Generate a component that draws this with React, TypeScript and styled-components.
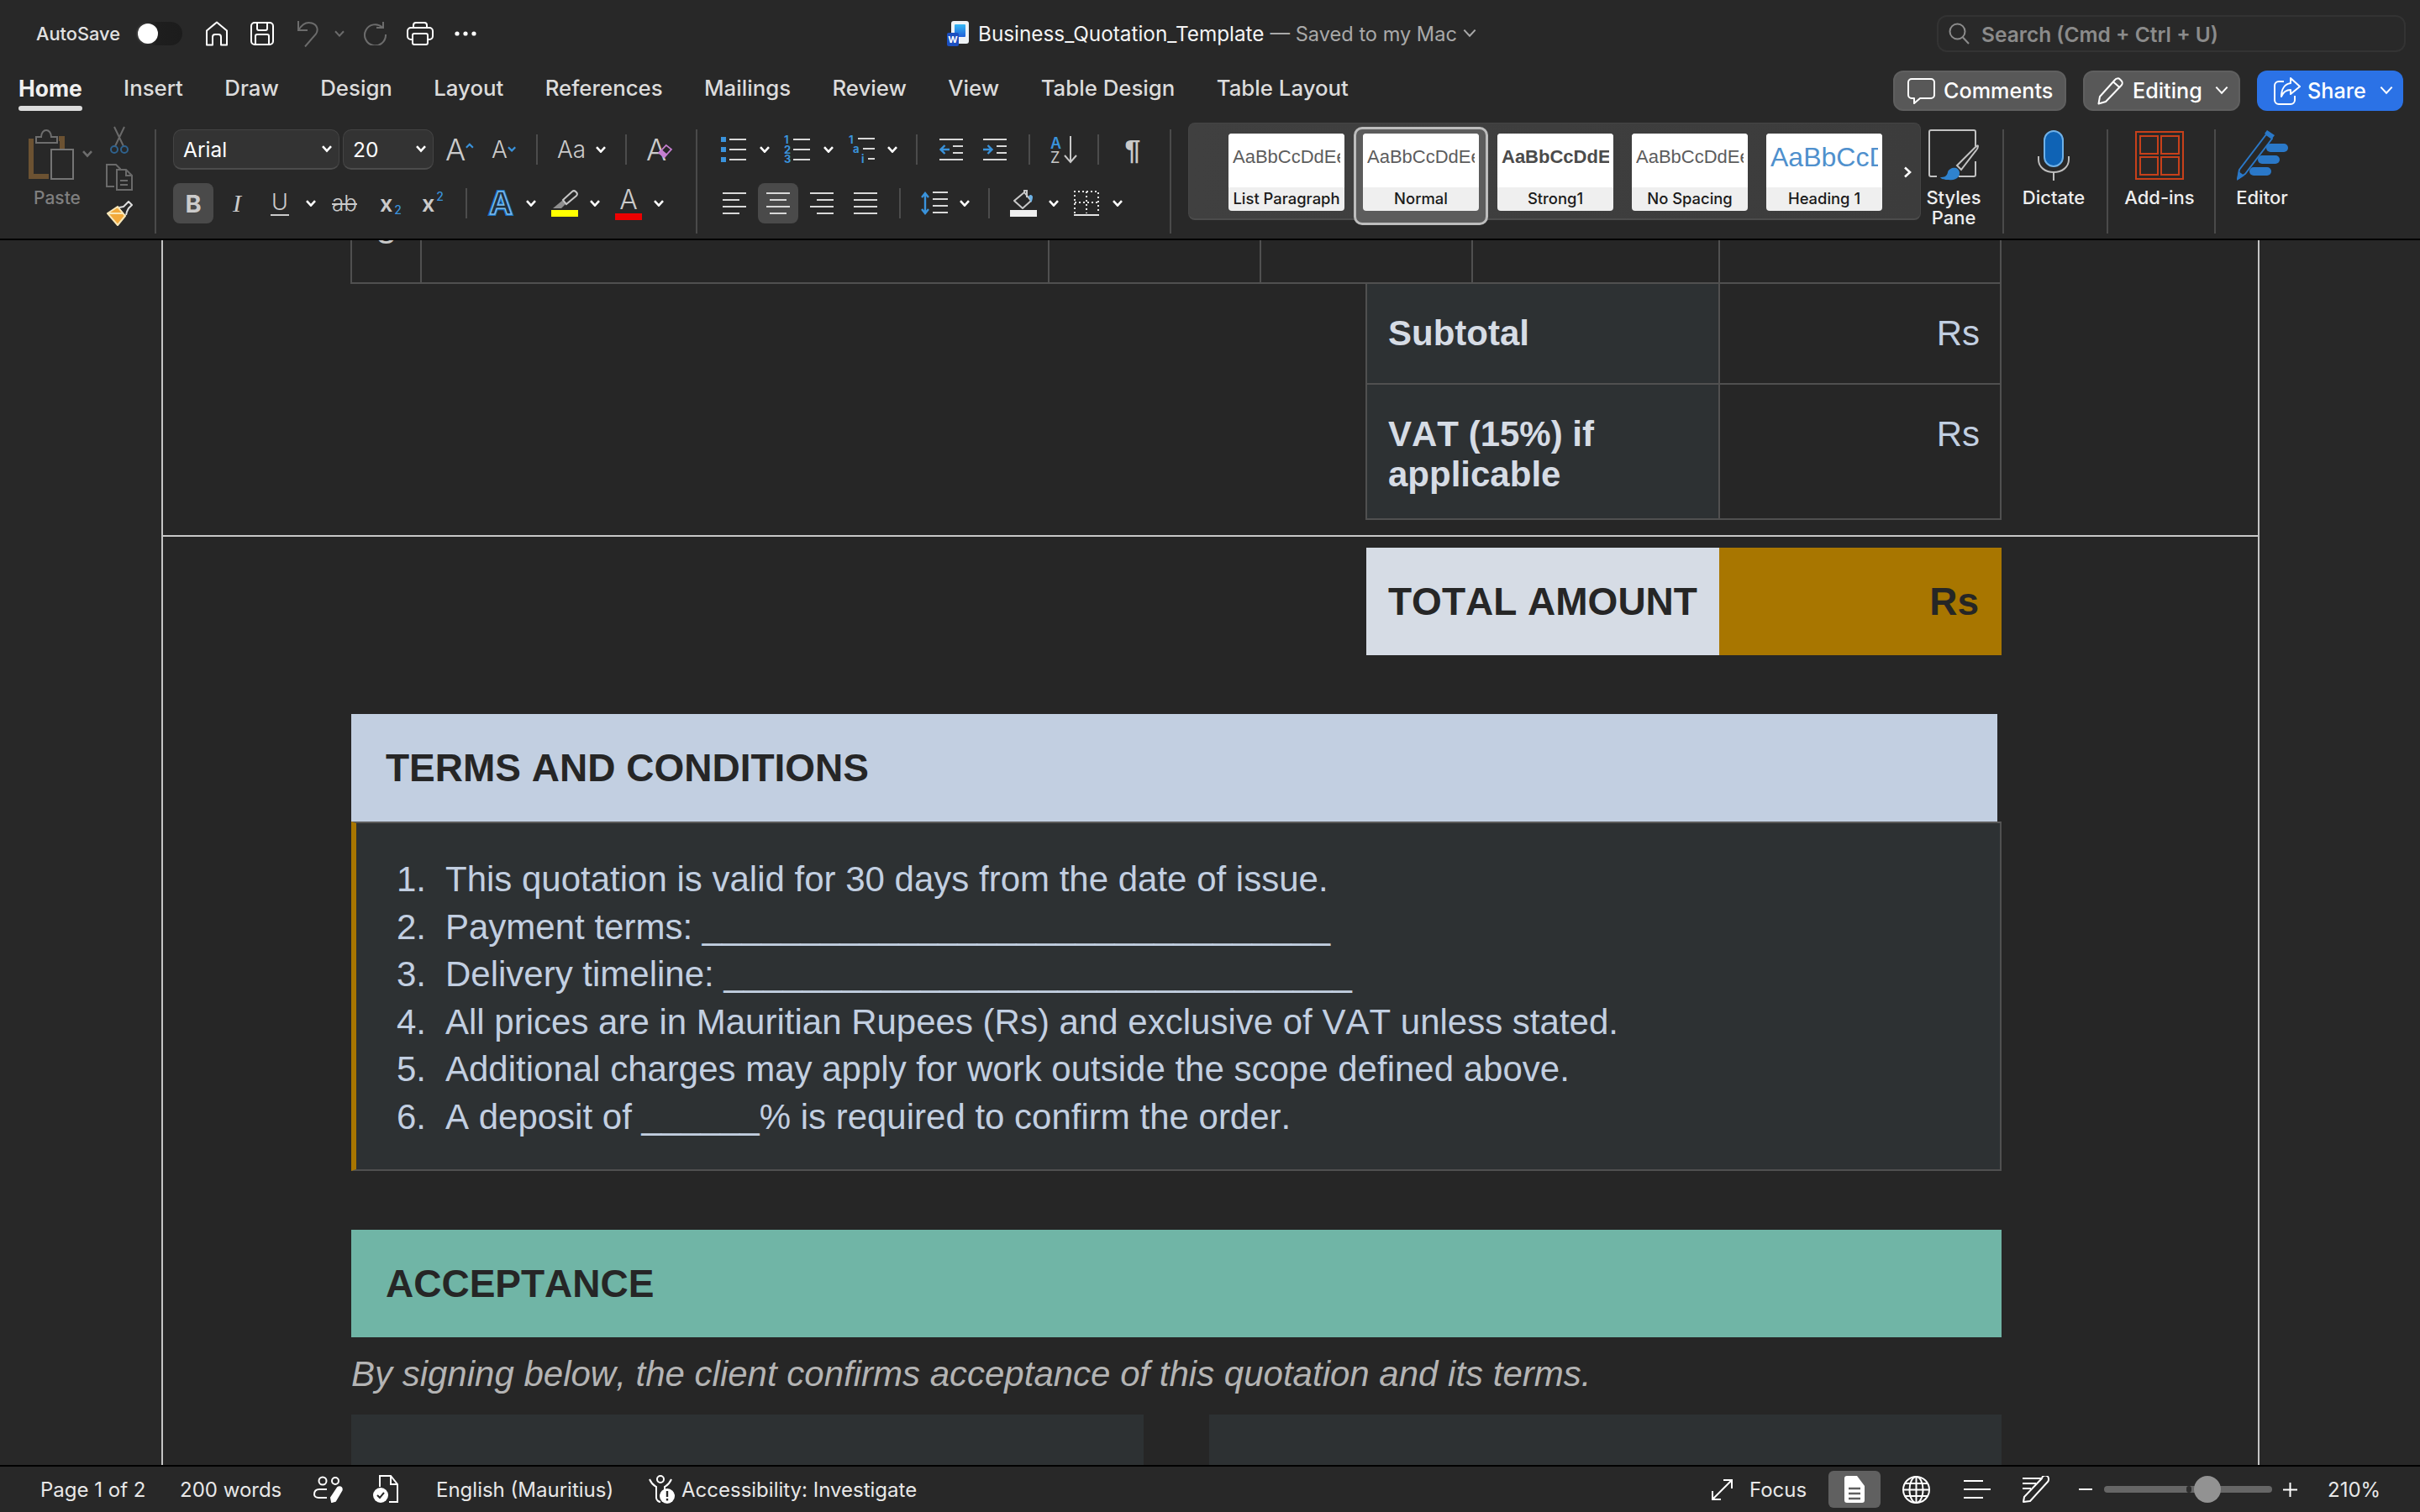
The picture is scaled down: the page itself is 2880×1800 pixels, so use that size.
import React from "react";
import styled, { createGlobalStyle } from "styled-components";

const UI_FONT = `Inter, "Noto Sans", "Liberation Sans", sans-serif`;
const DOC_FONT = `"Liberation Sans", Arial, sans-serif`;

const GlobalStyle = createGlobalStyle`
  html, body {
    margin: 0;
    padding: 0;
    background: #282828;
    overflow: hidden;
  }
  #root {
    width: 2880px;
    height: 1800px;
  }
  * {
    box-sizing: border-box;
  }
`;

const Shell = styled.div`
  width: 2880px;
  height: 1800px;
  display: flex;
  flex-direction: column;
  background: #282828;
  color: #fff;
  font-family: ${UI_FONT};
  overflow: hidden;
`;

/* generic slot for toolbars: width + gap before it */
const Slot = styled.div<{ $w: number; $ml?: number }>`
  flex: none;
  width: ${(p) => p.$w}px;
  margin-left: ${(p) => p.$ml || 0}px;
  display: flex;
  align-items: center;
  justify-content: center;
  white-space: nowrap;
`;

/* ---------- title bar ---------- */
const TitleBar = styled.div`
  height: 80px;
  display: flex;
  align-items: center;
  flex: none;
`;

const QuickTools = styled.div`
  width: 1127px;
  display: flex;
  align-items: center;
`;

const AutoSaveLabel = styled(Slot)`
  font-size: 21.8px;
  font-weight: 500;
  color: #e2e2e2;
  justify-content: flex-start;
`;

const Toggle = styled.div`
  flex: none;
  width: 55px;
  height: 28px;
  margin-left: 20px;
  border-radius: 14px;
  padding: 2px;
  background: linear-gradient(90deg, #3a3a3a, #1e1e1e 45%, #1c1c1c);
`;

const ToggleKnob = styled.div`
  width: 24px;
  height: 24px;
  border-radius: 50%;
  background: #fff;
`;

const DocTitle = styled.div`
  width: 1178px;
  display: flex;
  align-items: center;
  font-size: 24.3px;
  font-weight: 400;
  white-space: nowrap;
`;

const TitleName = styled.span`
  margin-left: 11px;
  color: #f4f4f4;
`;

const TitleSaved = styled.span`
  margin-left: 7px;
  font-size: 23.6px;
  color: #a9a9a9;
`;

const SearchBox = styled.div`
  width: 558px;
  height: 44px;
  border: 2px solid #333;
  border-radius: 12px;
  background: #292929;
  display: flex;
  align-items: center;
  padding: 2px 0 0 12px;
  gap: 14px;
  font-size: 24.5px;
  font-weight: 600;
  color: #8b8b8b;
  white-space: nowrap;
`;

/* ---------- tabs ---------- */
const TabRow = styled.div`
  height: 66px;
  display: flex;
  flex: none;
  justify-content: space-between;
`;

const Tabs = styled.div`
  display: flex;
  gap: 49.4px;
  padding: 8px 0 0 22px;
`;

const Tab = styled.div<{ $active?: boolean }>`
  font-size: ${(p) => (p.$active ? 26.4 : 25.8)}px;
  line-height: 34px;
  font-weight: ${(p) => (p.$active ? 700 : 500)};
  color: ${(p) => (p.$active ? "#f0f0f0" : "#dcdcdc")};
  white-space: nowrap;
  &::after {
    content: "";
    display: ${(p) => (p.$active ? "block" : "none")};
    height: 6px;
    margin-top: 4px;
    border-radius: 3px;
    background: #dcdcdc;
  }
`;

const ActionButtons = styled.div`
  display: flex;
  gap: 20px;
  padding: 4px 20px 0 0;
  align-items: flex-start;
`;

const ActionButton = styled.div<{ $w: number; $primary?: boolean }>`
  width: ${(p) => p.$w}px;
  height: 48px;
  border-radius: 12px;
  padding-left: ${(p) => (p.$primary ? 20 : 15)}px;
  background: ${(p) => (p.$primary ? "#2b72e6" : "#585858")};
  border: ${(p) => (p.$primary ? "none" : "2px solid #5f5f5f")};
  display: flex;
  align-items: center;
  gap: ${(p) => (p.$primary ? 8 : 10)}px;
  font-size: 25.2px;
  font-weight: 500;
  color: #fff;
  white-space: nowrap;
`;

const ButtonChevron = styled.span`
  display: flex;
  margin-left: auto;
  margin-right: 12px;
`;

/* ---------- ribbon ---------- */
const Ribbon = styled.div`
  height: 138px;
  flex: none;
  display: flex;
  align-items: flex-start;
`;

const MajorDivider = styled.div<{ $ml?: number }>`
  flex: none;
  width: 2px;
  height: 124px;
  margin-top: 8px;
  margin-left: ${(p) => p.$ml || 0}px;
  background: #4a4a4a;
`;

const ClipboardGroup = styled.div`
  width: 184px;
  flex: none;
  display: flex;
  padding: 4px 0 0 34px;
`;

const PasteCol = styled.div`
  width: 76px;
  padding-top: 3px;
  display: flex;
  flex-direction: column;
`;

const PasteIconRow = styled.div`
  display: flex;
  align-items: center;
  gap: 10px;
  height: 61px;
`;

const PasteLabel = styled.div`
  width: 68px;
  text-align: center;
  margin-top: 8px;
  font-size: 21px;
  line-height: 28px;
  font-weight: 500;
  color: #7f7f7f;
`;

const ClipTools = styled.div`
  width: 32px;
  margin-left: 16px;
  display: flex;
  flex-direction: column;
  align-items: center;
  gap: 12px;
`;

const ToolGroup = styled.div<{ $w: number }>`
  flex: none;
  width: ${(p) => p.$w}px;
  padding-top: 8px;
  display: flex;
  flex-direction: column;
  gap: 16px;
`;

const ToolRow = styled.div`
  height: 48px;
  display: flex;
  align-items: center;
`;

const Combo = styled.div<{ $w: number; $ml?: number }>`
  flex: none;
  width: ${(p) => p.$w}px;
  margin-left: ${(p) => p.$ml || 0}px;
  height: 48px;
  border-radius: 10px;
  border: 1px solid #444;
  border-bottom: 2px solid #4c4c4c;
  background: #333;
  display: flex;
  align-items: center;
  justify-content: space-between;
  padding: 0 8px 0 11px;
  font-size: 24.5px;
  color: #fff;
`;

const SmallSep = styled.div<{ $ml: number }>`
  flex: none;
  width: 2px;
  height: 36px;
  margin-left: ${(p) => p.$ml}px;
  background: #4c4c4c;
`;

const ToggledBox = styled.div<{ $w: number; $ml?: number; $on?: boolean }>`
  flex: none;
  width: ${(p) => p.$w}px;
  height: 48px;
  margin-left: ${(p) => p.$ml || 0}px;
  border-radius: 8px;
  background: ${(p) => (p.$on ? "#4a4a4a" : "transparent")};
  display: flex;
  align-items: center;
  justify-content: center;
`;

const Glyph = styled.span<{ $size: number; $weight?: number; $color?: string; $serif?: boolean; $italic?: boolean }>`
  font-size: ${(p) => p.$size}px;
  font-weight: ${(p) => p.$weight || 400};
  color: ${(p) => p.$color || "#cbcbcb"};
  font-family: ${(p) => (p.$serif ? `"Liberation Serif", serif` : "inherit")};
  font-style: ${(p) => (p.$italic ? "italic" : "normal")};
  line-height: 1;
`;

const UnderlineGlyph = styled(Glyph)`
  border-bottom: 2px solid #cbcbcb;
  padding: 0 1px 1px;
`;

const StrikeGlyph = styled(Glyph)`
  text-decoration: line-through;
  text-decoration-thickness: 2px;
`;

const Script = styled.span<{ $up?: boolean }>`
  align-self: ${(p) => (p.$up ? "flex-start" : "flex-end")};
  margin-left: 2px;
  font-size: 14px;
  font-weight: 500;
  line-height: 1;
  color: #3a93dc;
`;

const ScriptBox = styled.div`
  height: 30px;
  display: flex;
  align-items: center;
`;

/* text effects button: heavy outline with a lighter inner stroke on top */
const OutlineA = styled.span`
  position: relative;
  font-family: ${DOC_FONT};
  font-size: 38px;
  font-weight: 700;
  line-height: 1;
  color: #1a6fc0;
  -webkit-text-stroke: 4px #1a6fc0;
  &::after {
    content: "A";
    position: absolute;
    left: 0;
    top: 0;
    color: #22303c;
    -webkit-text-stroke: 1.5px #79bdf0;
  }
`;

const ColorStack = styled.div`
  display: flex;
  flex-direction: column;
  align-items: center;
  width: 32px;
`;

const ColorBar = styled.div<{ $color: string }>`
  width: 32px;
  height: 8px;
  background: ${(p) => p.$color};
`;

const Pilcrow = styled.span`
  font-family: ${DOC_FONT};
  font-size: 34px;
  font-weight: 700;
  line-height: 1;
  color: #c9c9c9;
`;

/* style gallery */
const Gallery = styled.div`
  flex: none;
  width: 872px;
  height: 116px;
  margin-left: 20px;
  padding: 12px 0 0 47px;
  display: flex;
  gap: 22px;
  border-radius: 8px;
  border: 1px solid #454545;
  border-bottom: 2px solid #4c4c4c;
  background: linear-gradient(90deg, #404040, #3c3c3c);
`;

const CardFrame = styled.div<{ $selected?: boolean }>`
  flex: none;
  ${(p) =>
    p.$selected
      ? `margin: -8px -11px; padding: 5px 8px; border: 3px solid #bdbdbd; border-radius: 10px; background: #5c5c5c;`
      : ""}
`;

const StyleCard = styled.div`
  width: 138px;
  height: 92px;
  border-radius: 4px;
  overflow: hidden;
  background: #efefef;
  font-family: ${DOC_FONT};
`;

const StylePreview = styled.div<{ $color?: string; $size?: number; $bold?: boolean }>`
  height: 64px;
  background: #fff;
  padding: 7px 5px 0;
  white-space: nowrap;
  line-height: 42px;
  font-size: ${(p) => p.$size || 22}px;
  font-weight: ${(p) => (p.$bold ? 700 : 400)};
  color: ${(p) => p.$color || "#5d5d5d"};
`;

const PreviewClip = styled.div`
  overflow: hidden;
`;

const StyleLabel = styled.div`
  height: 28px;
  text-align: center;
  font-family: ${UI_FONT};
  font-size: 18.4px;
  line-height: 26px;
  font-weight: 500;
  color: #1a1a1a;
  white-space: nowrap;
`;

const GalleryMore = styled(Slot)`
  height: 92px;
`;

const BigButton = styled.div<{ $w: number }>`
  flex: none;
  width: ${(p) => p.$w}px;
  padding-top: 6px;
  display: flex;
  flex-direction: column;
  align-items: center;
`;

const BigIcon = styled.div`
  height: 66px;
  display: flex;
  align-items: center;
  justify-content: center;
`;

const BigLabel = styled.div`
  margin-top: 5px;
  font-size: 22px;
  line-height: 24px;
  font-weight: 500;
  text-align: center;
  color: #eee;
`;

const BlackLine = styled.div`
  height: 2px;
  flex: none;
  background: #000;
`;

/* ---------- document ---------- */
const DocArea = styled.div`
  flex: 1;
  min-height: 0;
  overflow: hidden;
  padding: 0 191px 0 192px;
  background: #282828;
`;

const DocPage = styled.div`
  width: 2497px;
  height: 100%;
  border-left: 2px solid #c4c4c4;
  border-right: 2px solid #c4c4c4;
  background: #262626;
  font-family: ${DOC_FONT};
  font-kerning: none;
  overflow: hidden;
`;

const PageOne = styled.div`
  height: 351px;
  padding-left: 224px;
  border-bottom: 2px solid #c8c8c8;
  box-sizing: content-box;
`;

const ItemRow = styled.div`
  height: 52px;
  margin-left: -1px;
  width: 1965px;
  display: grid;
  grid-template-columns: 83px 747px 252px 252px 294px 337px;
  border-bottom: 2px solid #505050;
  border-right: 2px solid #505050;
`;

const ItemCell = styled.div`
  border-left: 2px solid #505050;
  overflow: hidden;
  display: flex;
  justify-content: center;
`;

const ClippedDigit = styled.span`
  font-size: 42px;
  line-height: 48px;
  height: 48px;
  margin-top: -34px;
  color: #c8c8c8;
`;

const TotalsTable = styled.div`
  width: 757px;
  margin-left: 1207px;
  display: grid;
  grid-template-columns: 420px 335px;
  border-left: 2px solid #505050;
  border-right: 2px solid #505050;
  border-bottom: 2px solid #505050;
`;

const TotalLabel = styled.div<{ $h: number }>`
  height: ${(p) => p.$h}px;
  padding: 35px 0 0 25px;
  background: #2d3133;
  border-right: 2px solid #505050;
  font-size: 42px;
  font-weight: 700;
  line-height: 48px;
  color: #d6dce5;
`;

const TotalValue = styled.div<{ $h: number }>`
  height: ${(p) => p.$h}px;
  padding: 35px 26px 0 0;
  text-align: right;
  font-size: 42px;
  line-height: 48px;
  color: #c2cfe1;
`;

const RowLine = styled.div`
  grid-column: 1 / 3;
  height: 2px;
  background: #505050;
`;

const Content = styled.div`
  padding: 13px 0 0 224px;
`;

const GrandTotal = styled.div`
  width: 756px;
  height: 128px;
  margin-left: 1208px;
  display: grid;
  grid-template-columns: 420px 336px;
  font-size: 46px;
  font-weight: 700;
  color: #262626;
`;

const GrandLabel = styled.div`
  background: #d6dce5;
  padding-left: 26px;
  display: flex;
  align-items: center;
`;

const GrandValue = styled.div`
  background: #a87600;
  padding-right: 27px;
  display: flex;
  align-items: center;
  justify-content: flex-end;
`;

const Banner = styled.div<{ $color: string; $w: number }>`
  width: ${(p) => p.$w}px;
  height: 128px;
  margin-top: 70px;
  padding-left: 41px;
  display: flex;
  align-items: center;
  background: ${(p) => p.$color};
  font-size: 46px;
  font-weight: 700;
  color: #262626;
`;

const TermsBody = styled.ol`
  width: 1964px;
  height: 416px;
  border-top: 2px solid #5a5a5a;
  border-left: 6px solid #a87600;
  border-right: 2px solid #505050;
  border-bottom: 2px solid #505050;
  background: #2d3133;
  padding: 39px 0 0 48px;
  margin: 0;
  list-style: none;
  font-size: 42px;
  line-height: 56.5px;
  color: #c2cfe1;
`;

const TermItem = styled.li`
  display: flex;
  white-space: pre;
`;

const TermNumber = styled.span`
  width: 58px;
  flex: none;
`;

const AcceptNote = styled.div`
  height: 92px;
  padding-bottom: 5px;
  display: flex;
  align-items: center;
  font-size: 42px;
  font-style: italic;
  color: #b4b4b4;
`;

const SignRow = styled.div`
  width: 1964px;
  display: flex;
  justify-content: space-between;
`;

const SignBox = styled.div`
  width: 943px;
  height: 120px;
  background: #2d3133;
`;

/* ---------- status bar ---------- */
const StatusBar = styled.div`
  height: 54px;
  flex: none;
  display: flex;
  align-items: center;
  justify-content: space-between;
  font-size: 24px;
  color: #e8e8e8;
`;

const StatusGroup = styled.div<{ $right?: boolean }>`
  display: flex;
  align-items: center;
  padding-right: ${(p) => (p.$right ? 50 : 0)}px;
`;

const StatusText = styled(Slot)`
  justify-content: flex-start;
`;

const ViewButton = styled(Slot)`
  height: 44px;
  border-radius: 6px;
  background: #606060;
`;

const ZoomTrack = styled.div`
  flex: none;
  position: relative;
  width: 200px;
  height: 8px;
  margin-left: 14px;
  border-radius: 4px;
  background: #666;
`;

const ZoomKnob = styled.div`
  position: absolute;
  left: 107px;
  top: -12px;
  width: 32px;
  height: 32px;
  border-radius: 50%;
  background: #929292;
`;

const ZoomTick = styled.div`
  position: absolute;
  left: 98px;
  top: 0;
  width: 6px;
  height: 8px;
  border-radius: 3px;
  background: #2c2c2c;
`;

/* ---------- icons ---------- */
const Chev = ({ color = "#fff", w = 12, sw = 2.6 }: { color?: string; w?: number; sw?: number }) => (
  <svg width={w} height={w * 0.7} viewBox="0 0 12 8.4" fill="none" stroke={color} strokeWidth={sw * (12 / w)} style={{ flex: "none" }}>
    <path d="M1 1.2 6 6.6 11 1.2" />
  </svg>
);

const Line = ({ x1, x2, y, color = "#d8d8d8" }: { x1: number; x2: number; y: number; color?: string }) => (
  <path d={`M${x1} ${y}H${x2}`} stroke={color} strokeWidth={2} fill="none" />
);

const HomeIcon = () => (
  <svg width="28" height="30" viewBox="0 0 28 30" fill="none" stroke="#fff" strokeWidth="2">
    <path d="M2 28.5V11.5L14 1.5l12 10v17h-7V19a3 3 0 0 0-3-3h-4a3 3 0 0 0-3 3v9.500z" strokeLinejoin="round" />
  </svg>
);

const SaveIcon = () => (
  <svg width="28" height="28" viewBox="0 0 28 28" fill="none" stroke="#fff" strokeWidth="2">
    <rect x="1" y="1" width="26" height="26" rx="4" />
    <path d="M8 1v7a2 2 0 0 0 2 2h8a2 2 0 0 0 2-2V1M6 27V17a2 2 0 0 1 2-2h12a2 2 0 0 1 2 2v10" />
  </svg>
);

const UndoIcon = () => (
  <svg width="28" height="32" viewBox="0 0 28 32" fill="none" stroke="#6c6c6c" strokeWidth="2">
    <path d="M2 1v11h11M2.500 11.500C7 4 13 2 18 3.500c7 2 8 8.500 5 13L10 31.500" />
  </svg>
);

const RedoIcon = () => (
  <svg width="28" height="28" viewBox="0 0 28 28" fill="none" stroke="#6c6c6c" strokeWidth="2">
    <path d="M23 5.500A12.500 12.500 0 1 0 27 14M16 6h8V-1" transform="translate(0 1)" />
  </svg>
);

const PrintIcon = () => (
  <svg width="32" height="28" viewBox="0 0 32 28" fill="none" stroke="#fff" strokeWidth="2">
    <path d="M8 7V4a3 3 0 0 1 3-3h10a3 3 0 0 1 3 3v3" />
    <path d="M7 21H5a4 4 0 0 1-4-4v-6a4 4 0 0 1 4-4h22a4 4 0 0 1 4 4v6a4 4 0 0 1-4 4h-2" />
    <rect x="7" y="14" width="18" height="13" rx="2" />
  </svg>
);

const DotsIcon = () => (
  <svg width="26" height="6" viewBox="0 0 26 6" fill="#fff">
    <circle cx="3" cy="3" r="2.600" />
    <circle cx="13" cy="3" r="2.600" />
    <circle cx="23" cy="3" r="2.600" />
  </svg>
);

const WordIcon = () => (
  <svg width="26" height="30" viewBox="0 0 26 30">
    <defs>
      <linearGradient id="wordFace" x1="0" y1="0" x2="0" y2="1">
        <stop offset="0" stopColor="#35b8f4" />
        <stop offset="1" stopColor="#1f5fd8" />
      </linearGradient>
    </defs>
    <rect x="5" y="0" width="21" height="27" rx="3" fill="#eef2f6" />
    <rect x="9" y="4" width="13" height="15" rx="1" fill="url(#wordFace)" />
    <rect x="0" y="14" width="14" height="16" rx="2" fill="#1c4fc0" />
    <text x="7" y="26" textAnchor="middle" fontSize="11" fontWeight="700" fill="#fff" fontFamily={UI_FONT}>W</text>
  </svg>
);

const SearchIcon = () => (
  <svg width="25" height="26" viewBox="0 0 25 26" fill="none" stroke="#8c8c8c" strokeWidth="2" style={{ marginTop: -2 }}>
    <circle cx="10.500" cy="10.500" r="9" />
    <path d="M17 17.500 24 25" />
  </svg>
);

const CommentIcon = () => (
  <svg width="33" height="31" viewBox="0 0 33 31" fill="none" stroke="#fff" strokeWidth="2" style={{ flex: "none" }}>
    <path d="M5 1h23a4 4 0 0 1 4 4v15a4 4 0 0 1-4 4H15l-7 6v-6H5a4 4 0 0 1-4-4V5a4 4 0 0 1 4-4z" strokeLinejoin="round" />
  </svg>
);

const PencilIcon = () => (
  <svg width="32" height="33" viewBox="0 0 32 33" fill="none" stroke="#fff" strokeWidth="2" style={{ flex: "none" }}>
    <path d="M1.500 31.500 3 23 21 3a4 4 0 0 1 6-.5l1.500 1.500a4 4 0 0 1 .2 5.500L10 29z" strokeLinejoin="round" />
    <path d="M19 5.500l8 7" />
  </svg>
);

const ShareIcon = () => (
  <svg width="32" height="34" viewBox="0 0 32 34" fill="none" stroke="#fff" strokeWidth="2" style={{ flex: "none" }}>
    <path d="M12 6H6a5 5 0 0 0-5 5v17a5 5 0 0 0 5 5h14a5 5 0 0 0 5-5v-5" />
    <path d="M20 2l11 10-11 9v-5c-6 0-9 3-11 8 0-9 4-15 11-16z" strokeLinejoin="round" />
  </svg>
);

const ClipboardIcon = () => (
  <svg width="54" height="61" viewBox="0 0 54 61" fill="none">
    <path d="M3 12v45h21M36 12h4v12" stroke="#6c5232" strokeWidth="6" />
    <path d="M9 17V10h6c0-5 3-8 6-8s6 3 6 8h7v7z" stroke="#6e6e6e" strokeWidth="2" fill="#282828" />
    <rect x="27" y="25" width="26" height="35" stroke="#757575" strokeWidth="2" fill="#282828" />
  </svg>
);

const ScissorsIcon = () => (
  <svg width="22" height="33" viewBox="0 0 22 33" fill="none">
    <path d="M5 1 16 24M17 1 6 24" stroke="#6a6a6a" strokeWidth="2" />
    <circle cx="5" cy="28" r="4" stroke="#2f628e" strokeWidth="2" />
    <circle cx="17" cy="28" r="4" stroke="#2f628e" strokeWidth="2" />
  </svg>
);

const CopyIcon = () => (
  <svg width="32" height="32" viewBox="0 0 32 32" fill="none" stroke="#6a6a6a" strokeWidth="2">
    <path d="M10 27H1V1h11l5 5v1" />
    <path d="M13 7h11l7 7v17H13z" />
    <path d="M24 7v7h7M17 20h9M17 25h9" />
  </svg>
);

const BrushIcon = () => (
  <svg width="32" height="30" viewBox="0 0 32 30">
    <path d="M2 15 14 7l9 11-9 11z" fill="#f2a93b" />
    <path d="M2 15 14 7l9 11-9 11zM2 15l18 0" fill="none" stroke="#f8e7b8" strokeWidth="2" strokeLinejoin="round" />
    <path d="M16 8l5-1 3-3 3-3 4 4-4 4-2 4-1 4" fill="#282828" stroke="#dedede" strokeWidth="2" strokeLinejoin="round" />
  </svg>
);

const CaretUp = () => (
  <svg width="11" height="7" viewBox="0 0 11 7" fill="none" stroke="#3a93dc" strokeWidth="2.400" style={{ alignSelf: "flex-start", marginTop: 10 }}>
    <path d="M1 6 5.500 1.500 10 6" />
  </svg>
);

const CaretDown = () => (
  <svg width="11" height="7" viewBox="0 0 11 7" fill="none" stroke="#3a93dc" strokeWidth="2.400" style={{ alignSelf: "flex-start", marginTop: 10 }}>
    <path d="M1 1 5.500 5.500 10 1" />
  </svg>
);

const EraserIcon = () => (
  <svg width="20" height="20" viewBox="0 0 20 20" fill="none" stroke="#c57fd0" strokeWidth="2" style={{ alignSelf: "flex-end", marginLeft: -10, marginBottom: 6 }}>
    <path d="M1.500 12 11 2l7 5.500-9.500 10.500z" fill="#282828" />
    <path d="M1.500 12l7 6 3-3.500-7-6z" fill="#c57fd0" />
  </svg>
);

const HighlighterIcon = () => (
  <svg width="32" height="24" viewBox="0 0 32 24">
    <path d="M2 22h10l6-6-4-4z" fill="#8f8f8f" />
    <path d="M14 12 25 2a3 3 0 0 1 4 0l1 1a3 3 0 0 1 0 4L18 17z" fill="none" stroke="#c6c6c6" strokeWidth="2" />
  </svg>
);

const BulletsIcon = () => (
  <svg width="30" height="30" viewBox="0 0 30 30" fill="#3a93dc">
    <rect x="0" y="0" width="6" height="6" />
    <rect x="0" y="12" width="6" height="6" />
    <rect x="0" y="24" width="6" height="6" />
    <Line x1={10} x2={30} y={3} />
    <Line x1={10} x2={30} y={15} />
    <Line x1={10} x2={30} y={27} />
  </svg>
);

const NumberingIcon = () => (
  <svg width="31" height="32" viewBox="0 0 31 32" fill="#3a93dc" fontSize="13" fontWeight="700" fontFamily={UI_FONT} overflow="visible">
    <text x="0" y="9">1</text>
    <text x="0" y="21">2</text>
    <text x="0" y="32">3</text>
    <Line x1={11} x2={31} y={4} />
    <Line x1={11} x2={31} y={16} />
    <Line x1={11} x2={31} y={28} />
  </svg>
);

const MultilevelIcon = () => (
  <svg width="31" height="32" viewBox="0 0 31 32" fill="#3a93dc" fontSize="13" fontWeight="700" fontFamily={UI_FONT} overflow="visible">
    <text x="0" y="9">1</text>
    <text x="5" y="20">a</text>
    <text x="15" y="32">i</text>
    <Line x1={11} x2={31} y={3} />
    <Line x1={17} x2={31} y={15} />
    <Line x1={23} x2={31} y={27} />
  </svg>
);

const AlignIcon = ({ mode }: { mode: "left" | "center" | "right" | "justify" }) => {
  const rows = [28, 20, 28, 20];
  return (
    <svg width="28" height="26" viewBox="0 0 28 26">
      {rows.map((len, i) => {
        const w = mode === "justify" ? 28 : len;
        const x = mode === "left" || mode === "justify" ? 0 : mode === "right" ? 28 - w : (28 - w) / 2;
        return <Line key={i} x1={x} x2={x + w} y={1 + i * 8} />;
      })}
    </svg>
  );
};

const IndentIcon = ({ out }: { out?: boolean }) => (
  <svg width="28" height="26" viewBox="0 0 28 26" fill="none">
    <Line x1={0} x2={28} y={1} />
    <Line x1={16} x2={28} y={9} />
    <Line x1={16} x2={28} y={17} />
    <Line x1={0} x2={28} y={25} />
    <path d={out ? "M12 13H2M6.500 8 1.500 13l5 5" : "M0 13h10M5.500 8l5 5-5 5"} stroke="#3a93dc" strokeWidth="2.400" />
  </svg>
);

const SortIcon = () => (
  <svg width="32" height="32" viewBox="0 0 32 32" fontFamily={UI_FONT} fontSize="18" overflow="visible">
    <text x="0" y="15" fill="#3a93dc" fontWeight="600">A</text>
    <text x="0" y="32" fill="#c9c9c9">Z</text>
    <path d="M24 0v30M17 23l7 8 7-8" fill="none" stroke="#c9c9c9" strokeWidth="2" />
  </svg>
);

const SpacingIcon = () => (
  <svg width="32" height="28" viewBox="0 0 32 28" fill="none">
    <path d="M5 3v22M1 7l4-5 4 5M1 21l4 5 4-5" stroke="#3a93dc" strokeWidth="2.400" />
    <Line x1={14} x2={32} y={1} />
    <Line x1={14} x2={32} y={9} />
    <Line x1={14} x2={32} y={17} />
    <Line x1={14} x2={32} y={25} />
  </svg>
);

const FillIcon = () => (
  <svg width="32" height="24" viewBox="0 0 32 24" fill="none">
    <path d="M5 13 17 3l8 10-10 9z" stroke="#c9c9c9" strokeWidth="2" strokeLinejoin="round" />
    <path d="M17 3V1h3v8" stroke="#c9c9c9" strokeWidth="2" />
    <path d="M22 8c2-3 4-2 5 0 0 3-1 6-2 7-1-2-1-4-3-7z" fill="#6db2e6" />
  </svg>
);

const BordersIcon = () => (
  <svg width="30" height="30" viewBox="0 0 30 30" fill="none" stroke="#e4e4e4" strokeWidth="2">
    <path d="M1 27V1h28v26M15 1v26M1 14h28" strokeDasharray="2 3" />
    <path d="M0 29h30" />
  </svg>
);

const StylesPaneIcon = () => (
  <svg width="60" height="62" viewBox="0 0 60 62" fill="none">
    <path d="M10 56H3a2 2 0 0 1-2-2V3a2 2 0 0 1 2-2h51a2 2 0 0 1 2 2v17M56 38v16a2 2 0 0 1-2 2H36" stroke="#c2c2c2" strokeWidth="2" />
    <path d="M34 43 56 21c2-2 3-2 3-1 0 2-1 4-3 6L39 48z" stroke="#c2c2c2" strokeWidth="2" fill="#282828" />
    <path d="M14 57c5 0 8-1 9-6 1-4 6-6 10-5 4 2 5 6 3 10-3 4-8 5-12 4-4 0-8 0-10-3z" fill="#2f83cf" />
  </svg>
);

const MicIcon = () => (
  <svg width="38" height="60" viewBox="0 0 38 60" fill="none">
    <rect x="8" y="1" width="22" height="42" rx="11" fill="#0f63b5" stroke="#6fb1e8" strokeWidth="2" />
    <path d="M1 31v4c0 9 8 15 18 15s18-6 18-15v-4M19 50v10" stroke="#bdbdbd" strokeWidth="2" />
  </svg>
);

const AddinsIcon = () => (
  <svg width="58" height="58" viewBox="0 0 58 58" fill="none" stroke="#c7401a" strokeWidth="2">
    <rect x="1" y="1" width="56" height="56" />
    <rect x="6" y="6" width="21" height="21" />
    <rect x="31" y="6" width="21" height="21" />
    <rect x="6" y="31" width="21" height="21" />
    <rect x="31" y="31" width="21" height="21" />
  </svg>
);

const EditorIcon = () => (
  <svg width="62" height="62" viewBox="0 0 62 62">
    <rect x="36" y="17" width="26" height="10" rx="5" fill="#2a78c8" />
    <rect x="26" y="31" width="26" height="10" rx="5" fill="#2a78c8" />
    <rect x="16" y="45" width="26" height="10" rx="5" fill="#2a78c8" />
    <path d="M2 59 4 48 36 6l7 5-32 42z" fill="#282828" stroke="#2a78c8" strokeWidth="2" strokeLinejoin="round" />
    <path d="M37 1l9 6-3 4-9-6z" fill="#2a78c8" />
    <path d="M1 61 3 50l7 5z" fill="#2a78c8" />
  </svg>
);

const PeopleIcon = () => (
  <svg width="36" height="32" viewBox="0 0 36 32" fill="none" stroke="#fff" strokeWidth="2">
    <circle cx="11" cy="6" r="4.500" />
    <circle cx="26" cy="6" r="4" />
    <path d="M16 26H6c-3 0-5-2-5-4 0-5 3-6 6-6h9" />
    <path d="M22 31l-1-5 8-12c1-1 3-1 4 0s1 3 0 4l-7 12z" fill="#fff" />
  </svg>
);

const DocCheckIcon = () => (
  <svg width="30" height="34" viewBox="0 0 30 34" fill="none">
    <path d="M8 14V1h13l8 10v21h-10" stroke="#fff" strokeWidth="2" />
    <path d="M21 1v10h8" stroke="#fff" strokeWidth="2" />
    <circle cx="9" cy="24" r="9" fill="#fff" />
    <path d="M5 24l3 3 5-6" stroke="#282828" strokeWidth="2" fill="none" />
  </svg>
);

const AccessIcon = () => (
  <svg width="33" height="34" viewBox="0 0 33 34" fill="none">
    <circle cx="15" cy="5" r="4" stroke="#fff" strokeWidth="2" />
    <path d="M2 5c3 7 7 8 8 9v13c0 3 3 5 5 5M28 5c-3 7-7 8-8 9v4" stroke="#fff" strokeWidth="2" />
    <circle cx="23" cy="25" r="9" fill="#fff" />
    <path d="M23 19v7M23 28v2.500" stroke="#282828" strokeWidth="2.400" />
  </svg>
);

const FocusIcon = () => (
  <svg width="25" height="25" viewBox="0 0 25 25" fill="none" stroke="#fff" strokeWidth="2">
    <path d="M2 23 23 2M14 1h10v10M1 14v10h10" />
  </svg>
);

const PageViewIcon = () => (
  <svg width="24" height="32" viewBox="0 0 24 32">
    <path d="M3 0h12l9 12v17a3 3 0 0 1-3 3H3a3 3 0 0 1-3-3V3a3 3 0 0 1 3-3z" fill="#fff" />
    <path d="M5 15h14M5 21h14M5 27h14" stroke="#606060" strokeWidth="2.400" />
  </svg>
);

const GlobeIcon = () => (
  <svg width="33" height="33" viewBox="0 0 33 33" fill="none" stroke="#fff" strokeWidth="2">
    <circle cx="16.500" cy="16.500" r="15.500" />
    <ellipse cx="16.500" cy="16.500" rx="8" ry="15.500" />
    <path d="M16.500 1v31M3 9h27M1 16.500h31M3 24h27" />
  </svg>
);

const LinesIcon = () => (
  <svg width="33" height="24" viewBox="0 0 33 24" fill="none" stroke="#fff" strokeWidth="2">
    <path d="M1 2h23M1 12h32M1 22h23" />
  </svg>
);

const DraftIcon = () => (
  <svg width="34" height="32" viewBox="0 0 34 32" fill="none" stroke="#fff" strokeWidth="2">
    <path d="M0 3h22M0 9h16M0 15h10" />
    <path d="M1 31l1-6L23 3a3.500 3.500 0 0 1 8 1 4 4 0 0 1-1 3L9 30z" strokeLinejoin="round" />
  </svg>
);

const TermsList = [
  "This quotation is valid for 30 days from the date of issue.",
  `Payment terms: ${"_".repeat(32)}`,
  `Delivery timeline: ${"_".repeat(32)}`,
  "All prices are in Mauritian Rupees (Rs) and exclusive of VAT unless stated.",
  "Additional charges may apply for work outside the scope defined above.",
  `A deposit of ${"_".repeat(6)}% is required to confirm the order.`,
];

const TAB_NAMES = ["Insert", "Draw", "Design", "Layout", "References", "Mailings", "Review", "View", "Table Design", "Table Layout"];

export default function App() {
  return (
    <Shell>
      <GlobalStyle />
      <TitleBar>
        <QuickTools>
          <AutoSaveLabel $w={99} $ml={43}>AutoSave</AutoSaveLabel>
          <Toggle>
            <ToggleKnob />
          </Toggle>
          <Slot $w={28} $ml={27}><HomeIcon /></Slot>
          <Slot $w={28} $ml={26}><SaveIcon /></Slot>
          <Slot $w={28} $ml={27}><UndoIcon /></Slot>
          <Slot $w={12} $ml={17}><Chev color="#6c6c6c" sw={2} /></Slot>
          <Slot $w={28} $ml={22}><RedoIcon /></Slot>
          <Slot $w={32} $ml={24}><PrintIcon /></Slot>
          <Slot $w={26} $ml={25}><DotsIcon /></Slot>
        </QuickTools>
        <DocTitle>
          <WordIcon />
          <TitleName>Business_Quotation_Template</TitleName>
          <TitleSaved>— Saved to my Mac</TitleSaved>
          <Slot $w={16} $ml={7}><Chev color="#a9a9a9" w={16} sw={2} /></Slot>
        </DocTitle>
        <SearchBox>
          <SearchIcon />
          Search (Cmd + Ctrl + U)
        </SearchBox>
      </TitleBar>

      <TabRow>
        <Tabs>
          <Tab $active>Home</Tab>
          {TAB_NAMES.map((name) => (
            <Tab key={name}>{name}</Tab>
          ))}
        </Tabs>
        <ActionButtons>
          <ActionButton $w={206}>
            <CommentIcon />
            Comments
          </ActionButton>
          <ActionButton $w={187}>
            <PencilIcon />
            Editing
            <ButtonChevron><Chev w={16} sw={2} /></ButtonChevron>
          </ActionButton>
          <ActionButton $w={174} $primary>
            <ShareIcon />
            Share
            <ButtonChevron><Chev w={16} sw={2} /></ButtonChevron>
          </ActionButton>
        </ActionButtons>
      </TabRow>

      <Ribbon>
        <ClipboardGroup>
          <PasteCol>
            <PasteIconRow>
              <ClipboardIcon />
              <Chev color="#6e6e6e" />
            </PasteIconRow>
            <PasteLabel>Paste</PasteLabel>
          </PasteCol>
          <ClipTools>
            <ScissorsIcon />
            <CopyIcon />
            <BrushIcon />
          </ClipTools>
        </ClipboardGroup>
        <MajorDivider />

        <ToolGroup $w={642}>
          <ToolRow>
            <Combo $w={198} $ml={20}>Arial<Chev /></Combo>
            <Combo $w={108} $ml={4}>20<Chev /></Combo>
            <Slot $w={34} $ml={14}>
              <Glyph $size={36} $weight={300}>A</Glyph>
              <CaretUp />
            </Slot>
            <Slot $w={29} $ml={21}>
              <Glyph $size={28} $weight={300}>A</Glyph>
              <CaretDown />
            </Slot>
            <SmallSep $ml={24} />
            <Slot $w={32} $ml={24}><Glyph $size={28} $weight={300}>Aa</Glyph></Slot>
            <Slot $w={12} $ml={13}><Chev /></Slot>
            <SmallSep $ml={23} />
            <Slot $w={32} $ml={23}>
              <Glyph $size={36} $weight={300}>A</Glyph>
              <EraserIcon />
            </Slot>
          </ToolRow>
          <ToolRow>
            <ToggledBox $w={48} $ml={20} $on><Glyph $size={29} $weight={700}>B</Glyph></ToggledBox>
            <Slot $w={28} $ml={14}><Glyph $size={30} $serif $italic>I</Glyph></Slot>
            <Slot $w={28} $ml={23}><UnderlineGlyph $size={27} $weight={300}>U</UnderlineGlyph></Slot>
            <Slot $w={12} $ml={17}><Chev /></Slot>
            <Slot $w={32} $ml={18}><StrikeGlyph $size={26} $weight={300}>ab</StrikeGlyph></Slot>
            <Slot $w={32} $ml={23}>
              <ScriptBox>
                <Glyph $size={27} $weight={600}>x</Glyph>
                <Script>2</Script>
              </ScriptBox>
            </Slot>
            <Slot $w={32} $ml={18}>
              <ScriptBox>
                <Glyph $size={27} $weight={600}>x</Glyph>
                <Script $up>2</Script>
              </ScriptBox>
            </Slot>
            <SmallSep $ml={23} />
            <Slot $w={32} $ml={24}><OutlineA>A</OutlineA></Slot>
            <Slot $w={12} $ml={14}><Chev /></Slot>
            <Slot $w={32} $ml={18}>
              <ColorStack>
                <HighlighterIcon />
                <ColorBar $color="#ffff00" />
              </ColorStack>
            </Slot>
            <Slot $w={12} $ml={14}><Chev /></Slot>
            <Slot $w={32} $ml={18}>
              <ColorStack>
                <Glyph $size={32} $weight={300}>A</Glyph>
                <ColorBar $color="#ee0000" />
              </ColorStack>
            </Slot>
            <Slot $w={12} $ml={14}><Chev /></Slot>
          </ToolRow>
        </ToolGroup>
        <MajorDivider />

        <ToolGroup $w={562}>
          <ToolRow>
            <Slot $w={30} $ml={28}><BulletsIcon /></Slot>
            <Slot $w={12} $ml={16}><Chev /></Slot>
            <Slot $w={31} $ml={17}><NumberingIcon /></Slot>
            <Slot $w={12} $ml={16}><Chev /></Slot>
            <Slot $w={31} $ml={18}><MultilevelIcon /></Slot>
            <Slot $w={12} $ml={15}><Chev /></Slot>
            <SmallSep $ml={22} />
            <Slot $w={28} $ml={26}><IndentIcon out /></Slot>
            <Slot $w={28} $ml={24}><IndentIcon /></Slot>
            <SmallSep $ml={26} />
            <Slot $w={32} $ml={24}><SortIcon /></Slot>
            <SmallSep $ml={24} />
            <Slot $w={20} $ml={30}><Pilcrow>¶</Pilcrow></Slot>
          </ToolRow>
          <ToolRow>
            <Slot $w={28} $ml={30}><AlignIcon mode="left" /></Slot>
            <ToggledBox $w={48} $ml={14} $on><AlignIcon mode="center" /></ToggledBox>
            <Slot $w={28} $ml={14}><AlignIcon mode="right" /></Slot>
            <Slot $w={28} $ml={24}><AlignIcon mode="justify" /></Slot>
            <SmallSep $ml={26} />
            <Slot $w={32} $ml={24}><SpacingIcon /></Slot>
            <Slot $w={12} $ml={14}><Chev /></Slot>
            <SmallSep $ml={22} />
            <Slot $w={32} $ml={24}>
              <ColorStack>
                <FillIcon />
                <ColorBar $color="#efefef" />
              </ColorStack>
            </Slot>
            <Slot $w={12} $ml={14}><Chev /></Slot>
            <Slot $w={30} $ml={18}><BordersIcon /></Slot>
            <Slot $w={12} $ml={16}><Chev /></Slot>
          </ToolRow>
        </ToolGroup>
        <MajorDivider />

        <Gallery>
          <CardFrame>
            <StyleCard>
              <StylePreview><PreviewClip>AaBbCcDdEe</PreviewClip></StylePreview>
              <StyleLabel>List Paragraph</StyleLabel>
            </StyleCard>
          </CardFrame>
          <CardFrame $selected>
            <StyleCard>
              <StylePreview><PreviewClip>AaBbCcDdEe</PreviewClip></StylePreview>
              <StyleLabel>Normal</StyleLabel>
            </StyleCard>
          </CardFrame>
          <CardFrame>
            <StyleCard>
              <StylePreview $bold $color="#4b4b4b"><PreviewClip>AaBbCcDdE</PreviewClip></StylePreview>
              <StyleLabel>Strong1</StyleLabel>
            </StyleCard>
          </CardFrame>
          <CardFrame>
            <StyleCard>
              <StylePreview><PreviewClip>AaBbCcDdEe</PreviewClip></StylePreview>
              <StyleLabel>No Spacing</StyleLabel>
            </StyleCard>
          </CardFrame>
          <CardFrame>
            <StyleCard>
              <StylePreview $size={32} $color="#4f90cd"><PreviewClip>AaBbCcDd</PreviewClip></StylePreview>
              <StyleLabel>Heading 1</StyleLabel>
            </StyleCard>
          </CardFrame>
          <GalleryMore $w={12} $ml={2}>
            <svg width="10" height="14" viewBox="0 0 10 14" fill="none" stroke="#fff" strokeWidth="2.600">
              <path d="M2 1.500 8 7l-6 5.500" />
            </svg>
          </GalleryMore>
        </Gallery>

        <BigButton $w={78}>
          <BigIcon><StylesPaneIcon /></BigIcon>
          <BigLabel>Styles<br />Pane</BigLabel>
        </BigButton>
        <MajorDivider $ml={19} />
        <BigButton $w={118}>
          <BigIcon><MicIcon /></BigIcon>
          <BigLabel>Dictate</BigLabel>
        </BigButton>
        <MajorDivider $ml={4} />
        <BigButton $w={122}>
          <BigIcon><AddinsIcon /></BigIcon>
          <BigLabel>Add-ins</BigLabel>
        </BigButton>
        <MajorDivider $ml={4} />
        <BigButton $w={110}>
          <BigIcon><EditorIcon /></BigIcon>
          <BigLabel>Editor</BigLabel>
        </BigButton>
      </Ribbon>
      <BlackLine />

      <DocArea>
        <DocPage>
          <PageOne>
            <ItemRow>
              <ItemCell><ClippedDigit>8</ClippedDigit></ItemCell>
              <ItemCell />
              <ItemCell />
              <ItemCell />
              <ItemCell />
              <ItemCell />
            </ItemRow>
            <TotalsTable>
              <TotalLabel $h={118}>Subtotal</TotalLabel>
              <TotalValue $h={118}>Rs</TotalValue>
              <RowLine />
              <TotalLabel $h={159}>VAT (15%) if applicable</TotalLabel>
              <TotalValue $h={159}>Rs</TotalValue>
            </TotalsTable>
          </PageOne>
          <Content>
            <GrandTotal>
              <GrandLabel>TOTAL AMOUNT</GrandLabel>
              <GrandValue>Rs</GrandValue>
            </GrandTotal>
            <Banner $color="#c2cfe1" $w={1959}>TERMS AND CONDITIONS</Banner>
            <TermsBody>
              {TermsList.map((text, i) => (
                <TermItem key={i}>
                  <TermNumber>{i + 1}.</TermNumber>
                  {text}
                </TermItem>
              ))}
            </TermsBody>
            <Banner $color="#70b5a6" $w={1964}>ACCEPTANCE</Banner>
            <AcceptNote>By signing below, the client confirms acceptance of this quotation and its terms.</AcceptNote>
            <SignRow>
              <SignBox />
              <SignBox />
            </SignRow>
          </Content>
        </DocPage>
      </DocArea>
      <BlackLine />

      <StatusBar>
        <StatusGroup>
          <StatusText $w={126} $ml={48}>Page 1 of 2</StatusText>
          <StatusText $w={119} $ml={40}>200 words</StatusText>
          <Slot $w={36} $ml={40}><PeopleIcon /></Slot>
          <Slot $w={30} $ml={35}><DocCheckIcon /></Slot>
          <StatusText $w={208} $ml={45}>English (Mauritius)</StatusText>
          <Slot $w={33} $ml={44}><AccessIcon /></Slot>
          <StatusText $w={277} $ml={7}>Accessibility: Investigate</StatusText>
        </StatusGroup>
        <StatusGroup $right>
          <Slot $w={25}><FocusIcon /></Slot>
          <StatusText $w={66} $ml={20}>Focus</StatusText>
          <ViewButton $w={62} $ml={28}><PageViewIcon /></ViewButton>
          <Slot $w={33} $ml={26}><GlobeIcon /></Slot>
          <Slot $w={33} $ml={39}><LinesIcon /></Slot>
          <Slot $w={34} $ml={38}><DraftIcon /></Slot>
          <Slot $w={16} $ml={33}>
            <svg width="16" height="2" viewBox="0 0 16 2"><path d="M0 1h16" stroke="#fff" strokeWidth="2" /></svg>
          </Slot>
          <ZoomTrack>
            <ZoomTick />
            <ZoomKnob />
          </ZoomTrack>
          <Slot $w={17} $ml={13}>
            <svg width="17" height="17" viewBox="0 0 17 17"><path d="M0 8.500h17M8.500 0v17" stroke="#fff" strokeWidth="2" /></svg>
          </Slot>
          <StatusText $w={60} $ml={36}>210%</StatusText>
        </StatusGroup>
      </StatusBar>
    </Shell>
  );
}
